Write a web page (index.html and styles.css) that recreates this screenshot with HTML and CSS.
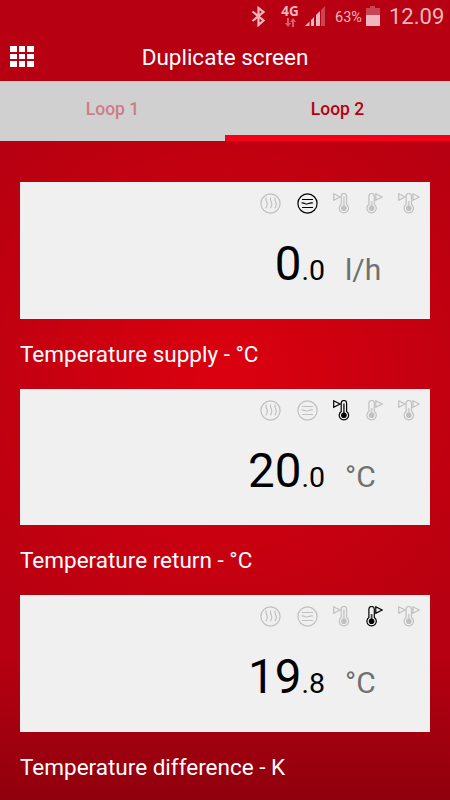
FILE: index.html
```html
<!DOCTYPE html>
<html lang="en">
<head>
  <meta charset="UTF-8" />
  <meta name="viewport" content="width=device-width, initial-scale=1.0"/>
  <title>Duplicate screen</title>
  <link rel="stylesheet" href="styles.css">
</head>
<body>
  <!-- Shared icons -->
  <svg class="sprite" width="0" height="0">
    <symbol id="heat" viewBox="0 0 21 21">
      <circle cx="10.5" cy="10.5" r="9.6"/>
      <path d="M6.3 4.500c-1.800 2.500 1.400 4 1 7-.2 1.500-.8 2.500-1.500 3.800M10.800 4.500c-1.800 2.500 1.400 4 1 7-.2 1.500-.8 2.500-1.500 3.800M15.300 4.500c-1.800 2.500 1.400 4 1 7-.2 1.500-.8 2.500-1.500 3.800"/>
    </symbol>
    <symbol id="flow" viewBox="0 0 21 21">
      <circle cx="10.5" cy="10.5" r="9.6"/>
      <path d="M5 6.500h11M4.500 10c2.500-.8 3.500 1.300 5.500 1s2.500-1.500 6-1M5 14.500h11"/>
    </symbol>
    <symbol id="supply" viewBox="0 0 17 22">
      <path d="M.7.8v6.400l6.300-3.200zM8.200 11.400V3.200a2.700 2.700 0 0 1 5.400 0v8.200a4.700 4.700 0 1 1-5.400 0z"/>
      <circle class="fill" cx="10.9" cy="15.2" r="2.800"/>
      <path class="tube" d="M10.900 3.500v10"/>
    </symbol>
    <symbol id="return" viewBox="0 0 17 22">
      <path d="M9.800.8v6.400l6.300-3.200zM2.900 11.400V3.200a2.700 2.700 0 0 1 5.400 0v8.200a4.700 4.700 0 1 1-5.400 0z"/>
      <circle class="fill" cx="5.6" cy="15.2" r="2.800"/>
      <path class="tube" d="M5.600 8v6"/>
    </symbol>
    <symbol id="diff" viewBox="0 0 22 22">
      <path d="M.7.8v6.400l6.300-3.200zM15 .8v6.400l6.300-3.200zM8.100 11.400V3.200a2.700 2.700 0 0 1 5.400 0v8.200a4.700 4.700 0 1 1-5.400 0z"/>
      <circle class="fill" cx="10.8" cy="15.2" r="2.800"/>
      <path class="tube" d="M10.800 8v6"/>
    </symbol>
  </svg>

  <div class="status-bar">
    <svg class="bluetooth" width="15" height="21" viewBox="0 0 15 21"><path d="M1.500 5.500l11 9-5 4.500V2l5 4-11 9"/></svg>
    <div class="network">
      <span>4G</span>
      <svg width="11" height="9" viewBox="0 0 11 9"><path d="M2 0h2v5h2L3 9 0 5h2zM7 9h2V4h2L8 0 5 4h2z"/></svg>
    </div>
    <svg class="signal" width="20" height="20" viewBox="0 0 20 20">
      <path d="M0 20l4.500-4.500V20zM6 14l3-3v9H6zM11 9l4-4v15h-4z"/>
      <path class="dim" d="M16 4l4-4v20h-4z"/>
    </svg>
    <span class="percent">63%</span>
    <svg class="battery" width="14" height="20" viewBox="0 0 14 20">
      <path class="dim" d="M4 0h5v2h5v7H0V2h4z"/>
      <path d="M0 9h14v11H0z"/>
    </svg>
    <span class="clock">12.09</span>
  </div>

  <header class="header">
    <button class="menu-btn" aria-label="Menu">
      <i></i><i></i><i></i><i></i><i></i><i></i><i></i><i></i><i></i>
    </button>
    <h1>Duplicate screen</h1>
  </header>

  <nav class="tabs">
    <a class="tab">Loop 1</a>
    <a class="tab active">Loop 2</a>
  </nav>

  <main class="content">
    <div class="card">
      <div class="icons">
        <svg width="21" height="21"><use href="#heat"/></svg>
        <svg class="on" width="21" height="21"><use href="#flow"/></svg>
        <svg width="17" height="22"><use href="#supply"/></svg>
        <svg width="17" height="22"><use href="#return"/></svg>
        <svg width="22" height="22"><use href="#diff"/></svg>
      </div>
      <div class="reading">
        <div class="value">0<small>.0</small></div>
        <div class="unit">l/h</div>
      </div>
    </div>
    <h2>Temperature supply - °C</h2>

    <div class="card">
      <div class="icons">
        <svg width="21" height="21"><use href="#heat"/></svg>
        <svg width="21" height="21"><use href="#flow"/></svg>
        <svg class="on" width="17" height="22"><use href="#supply"/></svg>
        <svg width="17" height="22"><use href="#return"/></svg>
        <svg width="22" height="22"><use href="#diff"/></svg>
      </div>
      <div class="reading">
        <div class="value">20<small>.0</small></div>
        <div class="unit">°C</div>
      </div>
    </div>
    <h2>Temperature return - °C</h2>

    <div class="card">
      <div class="icons">
        <svg width="21" height="21"><use href="#heat"/></svg>
        <svg width="21" height="21"><use href="#flow"/></svg>
        <svg width="17" height="22"><use href="#supply"/></svg>
        <svg class="on" width="17" height="22"><use href="#return"/></svg>
        <svg width="22" height="22"><use href="#diff"/></svg>
      </div>
      <div class="reading">
        <div class="value">19<small>.8</small></div>
        <div class="unit">°C</div>
      </div>
    </div>
    <h2>Temperature difference - K</h2>
  </main>
</body>
</html>
```

FILE: styles.css
```css
* {
  box-sizing: border-box;
  margin: 0;
  padding: 0;
}

body {
  height: 100vh;
  overflow: hidden;
  display: flex;
  flex-direction: column;
  font-family: Roboto, 'Liberation Sans', sans-serif;
  color: #fff;
  background: #b70011;
}

.sprite {
  position: absolute;
}

/* Status bar */
.status-bar {
  height: 32px;
  flex-shrink: 0;
  display: flex;
  align-items: center;
  justify-content: flex-end;
  padding-right: 6px;
  color: #efb7bd;
  fill: #efb7bd;
}

.bluetooth {
  fill: none;
  stroke: #efb7bd;
  stroke-width: 2.2;
  margin-right: 15px;
}

.network {
  width: 18px;
  display: flex;
  flex-direction: column;
  align-items: center;
  margin-right: 6px;
  font: bold 13.5px/12px 'Open Sans', sans-serif;
}

.network svg {
  fill: #d3616c;
  margin-top: 1px;
}

.dim {
  fill: #ca4553;
}

.percent {
  width: 27px;
  margin: 2px 4px 0 10px;
  font-size: 14.5px;
  white-space: nowrap;
}

.clock {
  width: 55px;
  margin: 1px 0 0 9px;
  font-size: 22px;
  white-space: nowrap;
}

/* Header */
.header {
  height: 49px;
  flex-shrink: 0;
  display: grid;
  grid-template-columns: 40px 1fr 40px;
  align-items: center;
}

.header h1 {
  font-size: 22.5px;
  font-weight: 400;
  text-align: center;
}

.menu-btn {
  display: grid;
  grid-template-columns: repeat(3, 6.5px);
  gap: 2px;
  margin-left: 10px;
  border: none;
  background: none;
}

.menu-btn i {
  height: 5.5px;
  background: #fff;
}

/* Tabs */
.tabs {
  height: 60px;
  flex-shrink: 0;
  display: flex;
  background: #d0d0d0;
}

.tab {
  flex: 1;
  padding-top: 18px;
  font-size: 17.5px;
  font-weight: 500;
  line-height: 20px;
  text-align: center;
  color: #cf7c86;
}

.tab.active {
  color: #b70011;
  border-bottom: 6px solid #f50018;
}

/* Readings */
.content {
  flex: 1;
  padding: 41px 20px 0;
  background:
    linear-gradient(transparent 78%, rgba(70, 0, 5, 0.35)),
    radial-gradient(circle 310px at 50% 36%, #dc000f, #b70011);
}

.card {
  height: 136.5px;
  padding-top: 11px;
  background: #f0f0f0;
}

.icons {
  display: flex;
  justify-content: flex-end;
  gap: 15.5px;
  height: 22px;
  padding-right: 10px;
  fill: none;
  stroke: #c0c0c0;
  stroke-width: 1.2;
  color: #c0c0c0;
}

.icons .on {
  stroke: #000;
  color: #000;
}

.fill {
  fill: currentColor;
  stroke: none;
}

.tube {
  stroke-width: 1.8;
  opacity: 0.7;
}

.reading {
  display: flex;
  align-items: baseline;
  margin-top: 20px;
  line-height: 58px;
}

.value {
  width: 305px;
  text-align: right;
  font-size: 47.5px;
  color: #000;
}

.value small {
  font-size: 28.5px;
}

.unit {
  margin-left: 20px;
  font-size: 30px;
  color: #707070;
}

.content h2 {
  height: 70px;
  font-size: 22.5px;
  font-weight: 400;
  line-height: 71.5px;
}
```
